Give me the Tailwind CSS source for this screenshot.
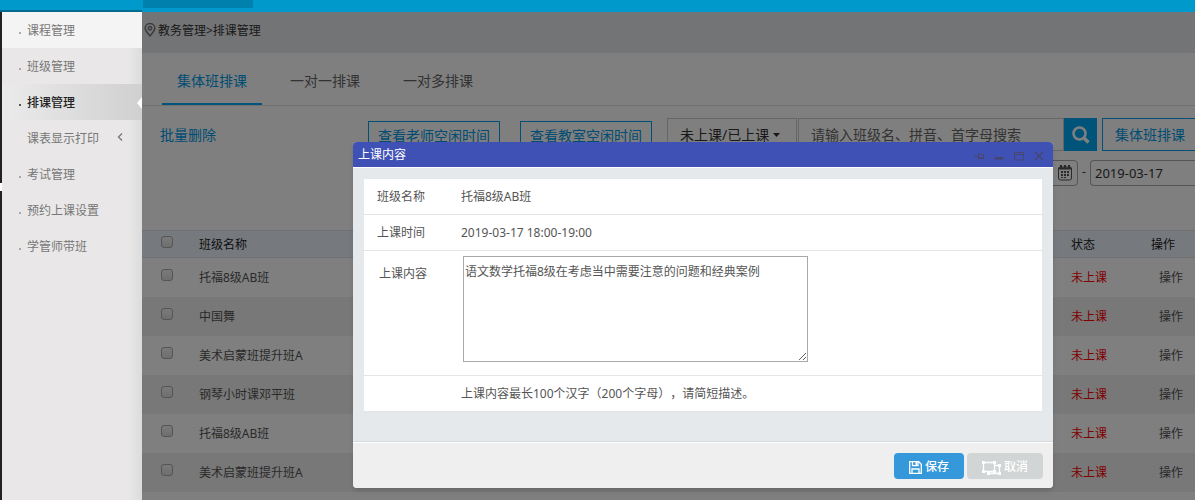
<!DOCTYPE html>
<html lang="zh-CN">
<head>
<meta charset="utf-8">
<title>排课管理</title>
<script src="https://cdn.jsdelivr.net/npm/@tailwindcss/browser@4"></script>
</head>
<body class="flex h-screen flex-col overflow-hidden bg-white font-['Noto_Sans','Noto_Sans_CJK_SC',sans-serif] text-xs text-[#555] [text-spacing-trim:space-all]">
<header class="flex h-3 shrink-0 bg-[#0099cc]">
  <div class="w-[142px] border-b-2 border-[#036a8d]"></div>
  <div class="ml-px h-2 w-[110px] bg-[#0080ac]"></div>
</header>
<div class="flex min-h-0 flex-1">
  <div class="flex w-[2px] shrink-0 flex-col bg-[#222]"><div class="mt-[171px] h-2 bg-white"></div></div>
  <nav class="w-[140px] shrink-0 bg-[#e9e7e8] bg-linear-to-r from-[#e9e7e8] from-90% to-[#dcdcdc] text-[#777]">
    <ul>
      <li><a href="#" class="flex h-9 items-center bg-[#f4f4f4] pt-0.5"><span class="mt-1 mr-1.5 ml-[17px] size-0.5 bg-[#aaa]"></span>课程管理</a></li>
      <li><a href="#" class="flex h-9 items-center pt-0.5"><span class="mt-1 mr-1.5 ml-[17px] size-0.5 bg-[#aaa]"></span>班级管理</a></li>
      <li><a href="#" class="flex h-9 items-center bg-linear-to-r from-[#ebebeb] to-[#d0d0d0] pt-0.5 font-medium text-[#222]"><span class="mt-1 mr-1.5 ml-[17px] size-0.5 bg-[#555]"></span>排课管理
        <svg class="ml-auto h-3 w-[5px]" viewBox="0 0 5 12" fill="#fff"><path d="M5 0v12L0 6z"/></svg></a></li>
      <li><a href="#" class="flex h-9 items-center pt-0.5 pr-[19px] pl-[25px]">课表显示打印
        <svg class="mb-1 ml-auto h-2 w-1.5" viewBox="0 0 6 8" fill="none" stroke="#777" stroke-width="1.3"><path d="M5 .5 1.500 4 5 7.500"/></svg></a></li>
      <li><a href="#" class="flex h-9 items-center pt-0.5"><span class="mt-1 mr-1.5 ml-[17px] size-0.5 bg-[#aaa]"></span>考试管理</a></li>
      <li><a href="#" class="flex h-9 items-center pt-0.5"><span class="mt-1 mr-1.5 ml-[17px] size-0.5 bg-[#aaa]"></span>预约上课设置</a></li>
      <li><a href="#" class="flex h-9 items-center pt-0.5"><span class="mt-1 mr-1.5 ml-[17px] size-0.5 bg-[#aaa]"></span>学管师带班</a></li>
    </ul>
  </nav>
  <div class="relative min-w-0 flex-1 overflow-hidden">
    <main class="bg-white">
      <div class="flex h-[41px] items-center gap-0.5 bg-[#e7e9eb] pb-1 pl-0.5 text-[#333]">
        <svg class="mb-0.5 h-3.5 w-3" viewBox="0 0 12 14" fill="none" stroke="#777" stroke-width="1.5"><path d="M6 13C3 9.500 1.200 7.500 1.200 5.300a4.800 4.800 0 0 1 9.600 0C10.800 7.500 9 9.500 6 13z"/><circle cx="6" cy="5.300" r="1.700"/></svg>
        <span>教务管理&gt;排课管理</span>
      </div>
      <div class="flex h-[53px] gap-[13px] border-b border-[#e0e0e0] pl-5 text-sm text-[#666]">
        <a href="#" class="flex items-center border-b-2 border-[#00a8f5] px-[15px] pt-1.5 text-[#0099e5]">集体班排课</a>
        <a href="#" class="flex items-center px-[15px] pt-1">一对一排课</a>
        <a href="#" class="flex items-center px-[15px] pt-1">一对多排课</a>
      </div>
      <div class="flex h-[54px] items-start pt-3 pl-[18px] text-sm whitespace-nowrap">
        <a href="#" class="mt-[7px] w-[208px] shrink-0 text-[#0099e5]">批量删除</a>
        <button class="mt-[3px] h-[30px] w-[132px] shrink-0 border border-[#00a0f0] text-[#0099e5]">查看老师空闲时间</button>
        <button class="mt-[3px] ml-5 h-[30px] w-[132px] shrink-0 border border-[#00a0f0] text-[#0099e5]">查看教室空闲时间</button>
        <button class="ml-[15px] flex h-[33px] w-[130px] shrink-0 items-center border border-[#ccc] pl-3 text-[#333]">未上课/已上课<svg class="ml-1 h-1 w-[7px]" viewBox="0 0 7 4" fill="#333"><path d="M0 0h7L3.500 4z"/></svg></button>
        <input type="text" aria-label="搜索班级" placeholder="请输入班级名、拼音、首字母搜索" class="ml-px h-[33px] w-[266px] shrink-0 border border-[#ccc] px-3 placeholder:text-[#666]">
        <button aria-label="搜索" class="flex h-[33px] w-[33px] shrink-0 items-center justify-center bg-[#00a8f5]"><svg class="size-[18px]" viewBox="0 0 18 18" fill="none" stroke="#fff" stroke-width="2.500"><circle cx="7.500" cy="7.500" r="6"/><path d="m12 12 4.500 4.500" stroke-width="3.500"/></svg></button>
        <button class="ml-[5px] h-[33px] w-24 shrink-0 border border-[#00a0f0] text-[#0099e5]">集体班排课</button>
      </div>
      <div class="flex h-[70px] items-start justify-end">
        <button aria-label="选择日期" class="flex h-[26px] w-[30px] items-center justify-center rounded-r border border-[#aaa]">
          <svg class="ml-1 size-4" viewBox="0 0 16 16" fill="#555"><path d="M3 0h2v3H3zM7 0h2v3H7zM11 0h2v3h-2zM4 6h2v2H4zM7 6h2v2H7zM10 6h2v2h-2zM4 9h2v2H4zM7 9h2v2H7zM10 9h2v2h-2zM4 12h2v1H4zM7 12h2v1H7z"/><rect x="1.500" y="2" width="13" height="13" rx="2" fill="none" stroke="#555"/><path d="M1.500 3.500h13" stroke="#555" stroke-width="2"/></svg></button>
        <span class="w-3 pt-1 text-center text-[#333]">-</span>
        <input type="text" aria-label="结束日期" value="2019-03-17" class="h-[26px] w-[105px] rounded-l border border-r-0 border-[#aaa] px-1 text-[13px] text-[#333]">
      </div>
      <table class="w-full table-fixed border-collapse text-left">
        <colgroup><col class="w-[57px]"><col><col class="w-20"><col class="w-11"></colgroup>
        <thead><tr class="h-[27px] border-y border-[#dde0e5] bg-[#ecf2fb] text-[#222]">
          <th class="pl-[19px]"><input type="checkbox" aria-label="全选" class="block size-3 -translate-y-0.5 appearance-none rounded-[3px] border border-[#aaa] bg-linear-to-b from-[#f5f5f5] to-[#ddd]"></th>
          <th class="pt-0.5 font-normal">班级名称</th><th class="pt-0.5 font-normal">状态</th><th class="pt-0.5 font-normal whitespace-nowrap">操作</th></tr></thead>
        <tbody id="rows"></tbody>
      </table>
      <div class="h-3"></div>
    </main>
    <div class="absolute inset-0 bg-black/50"></div>

    <section role="dialog" aria-labelledby="dlg" class="absolute top-[130px] left-[211px] w-[700px] overflow-hidden rounded bg-[#e5e9ec] shadow-md">
      <div class="flex h-[26px] items-center border-b border-white bg-[#3f51b5] pr-[9px] pl-[5px] text-white">
        <h2 id="dlg" class="pt-px">上课内容</h2>
        <div class="ml-auto flex gap-2.5 pt-0.5 text-[#46466f]">
          <button aria-label="固定"><svg class="size-2.5" viewBox="0 0 10 10" fill="none" stroke="currentColor"><path d="M0 5.500h4M4.500 2v7M5 3.500h4.500v4H5M5 6.500h4"/></svg></button>
          <button aria-label="最小化"><svg class="size-2.5" viewBox="0 0 10 10" fill="currentColor"><rect y="6" x=".5" width="9" height="2.500" rx="1"/></svg></button>
          <button aria-label="最大化"><svg class="size-2.5" viewBox="0 0 10 10" fill="none" stroke="currentColor"><rect x=".5" y="1.500" width="9" height="7.500" rx="1"/><path d="M1 3.500h8"/></svg></button>
          <button aria-label="关闭"><svg class="size-2.5" viewBox="0 0 10 10" fill="none" stroke="currentColor" stroke-width="1.400"><path d="m1 1 8 8M9 1 1 9"/></svg></button>
        </div>
      </div>
      <form>
        <div class="mx-[11px] mt-[11px] mb-7 border-b-2 border-[#e3e5e7] bg-white">
          <div class="flex h-9 items-center border-b border-[#e5e5e5] pl-[13px]"><span class="w-21">班级名称</span><span>托福8级AB班</span></div>
          <div class="flex h-9 items-center border-b border-[#e5e5e5] pl-[13px]"><span class="w-21">上课时间</span><span>2019-03-17 18:00-19:00</span></div>
          <div class="flex h-[125px] items-start border-b border-[#e5e5e5] pt-[5px] pl-[15px]"><label for="content" class="w-21 pt-2.5">上课内容</label><textarea id="content" class="h-[106px] w-[345px] border border-[#a9a9a9] px-px py-[7px]">语文数学托福8级在考虑当中需要注意的问题和经典案例</textarea></div>
          <p class="flex h-[35px] items-center pl-[97px]">上课内容最长100个汉字（200个字母），请简短描述。</p>
        </div>
        <div class="border-t border-[#d5d9dc]">
        <div class="flex h-[46px] items-center justify-end gap-[3px] border-t border-white bg-[#efefef] pr-2.5 text-white">
          <button type="button" class="flex h-[26px] w-[70px] items-center justify-center gap-[3px] rounded bg-[#3498db] font-medium"><svg class="mt-1 size-[13px]" viewBox="0 0 13 13" fill="none" stroke="#fff" stroke-width="1.300"><path d="M.7.7h9l2.600 2.600v9H.7z"/><path d="M3.500.7v4h5.500v-4M3 12.300V8h7v4.300"/><path d="M7.300 1v3" stroke-width="1.600"/></svg><span class="pt-0.5">保存</span></button>
          <button type="button" class="flex h-[26px] w-[76px] items-center justify-center gap-[3px] rounded bg-[#d1d5d6] font-medium"><svg class="mt-1 h-3.5 w-[19px]" viewBox="0 0 19 14" fill="none" stroke="#fff" stroke-width="1.300"><path d="M1.500 1.500h11v9h-11zM13 4.500h4.500v8h-11V11"/><g fill="#fff" stroke="none"><path d="M0 0h3v3H0zM11 0h3v3h-3zM0 9h3v3H0zM11 9h3v3h-3zM16 3h3v3h-3zM16 11h3v3h-3zM5 11h3v3H5z"/></g></svg><span class="pt-0.5">取消</span></button>
        </div>
        </div>
      </form>
    </section>
  </div>
</div>
<script>
  document.getElementById('rows').innerHTML = ['托福8级AB班', '中国舞', '美术启蒙班提升班A', '钢琴小时课邓平班', '托福8级AB班', '美术启蒙班提升班A'].map(name => `
    <tr class="h-[39px] even:bg-[#f0f0f0]">
      <td class="pl-[19px]"><input type="checkbox" aria-label="${name}" class="block size-3 -translate-y-0.5 appearance-none rounded-[3px] border border-[#aaa] bg-linear-to-b from-[#f5f5f5] to-[#ddd]"></td>
      <td class="pt-0.5">${name}</td><td class="pt-0.5 text-[#f00]">未上课</td><td class="pt-0.5 pl-2 whitespace-nowrap"><a href="#">操作</a></td>
    </tr>`).join('');
</script>
</body>
</html>
